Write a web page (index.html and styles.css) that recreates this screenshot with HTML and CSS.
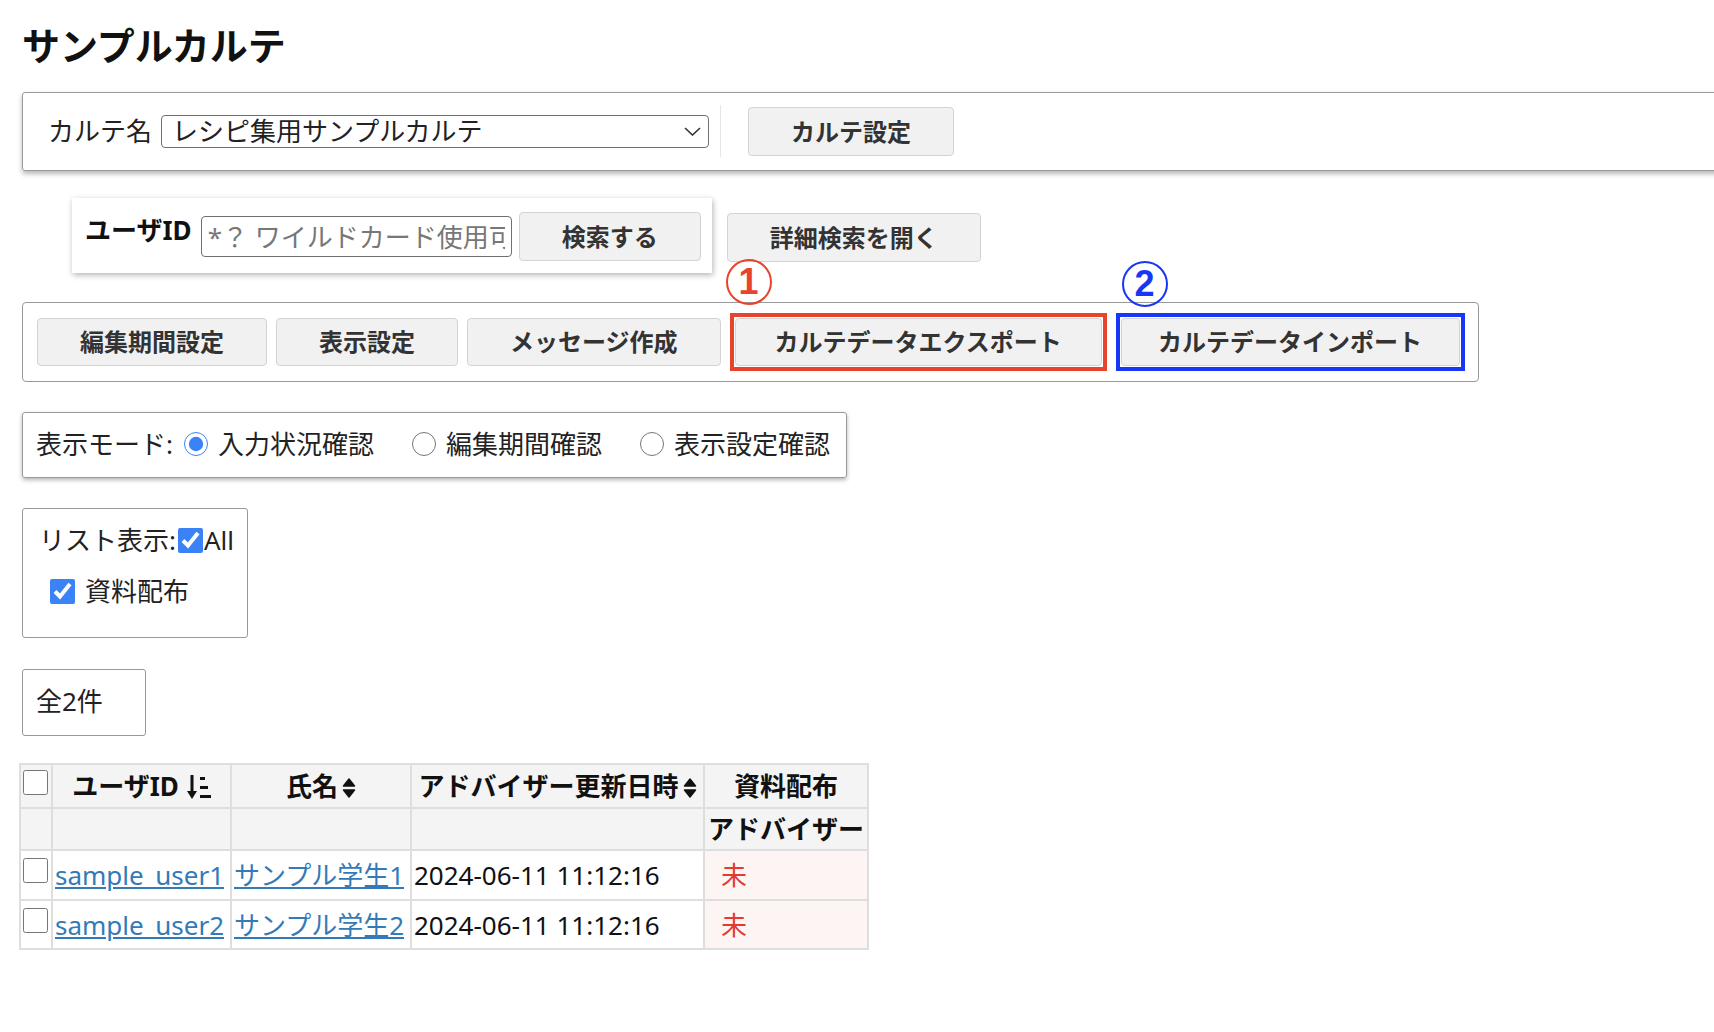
FILE: index.html
```html
<!DOCTYPE html>
<html lang="ja">
<head>
<meta charset="utf-8">
<title>サンプルカルテ</title>
<link rel="stylesheet" href="styles.css">
</head>
<body>
<h1 class="page-title">サンプルカルテ</h1>

<div class="karte-bar">
  <label class="karte-label">カルテ名</label>
  <span class="select-wrap">
    <select class="karte-select"><option>レシピ集用サンプルカルテ</option></select>
    <svg class="select-chevron" width="17" height="9" viewBox="0 0 17 9"><path d="M1 1l7.5 7 7.5-7" fill="none" stroke="#333" stroke-width="1.6"/></svg>
  </span>
  <span class="divider"></span>
  <button class="btn btn-top">カルテ設定</button>
</div>

<div class="search-row">
  <div class="search-box">
    <span class="search-label">ユーザID</span>
    <input class="search-input" type="text" placeholder="*？ ワイルドカード使用可">
    <button class="btn btn-top">検索する</button>
  </div>
  <button class="btn btn-top btn-detail">詳細検索を開く</button>
</div>

<div class="action-bar">
  <button class="btn btn-action">編集期間設定</button>
  <button class="btn btn-action">表示設定</button>
  <button class="btn btn-action">メッセージ作成</button>
  <div class="annot annot-red">
    <span class="mark mark-red">1</span>
    <button class="btn btn-action btn-export">カルテデータエクスポート</button>
  </div>
  <div class="annot annot-blue">
    <span class="mark mark-blue">2</span>
    <button class="btn btn-action btn-import">カルテデータインポート</button>
  </div>
</div>

<div class="mode-box">
  <span class="mode-label">表示モード:</span>
  <label class="mode-opt mode-first"><input type="radio" name="mode" checked>入力状況確認</label>
  <label class="mode-opt"><input type="radio" name="mode">編集期間確認</label>
  <label class="mode-opt"><input type="radio" name="mode">表示設定確認</label>
</div>

<div class="list-box">
  <div class="list-row1">リスト表示:<input type="checkbox" checked class="cb cb-all">All</div>
  <div class="list-row2"><input type="checkbox" checked class="cb cb-item">資料配布</div>
</div>

<div class="count-box">全2件</div>

<table class="list-table">
  <colgroup>
    <col class="w1"><col class="w2"><col class="w3"><col class="w4"><col class="w5">
  </colgroup>
  <thead>
    <tr class="head1">
      <th class="c-check"><input type="checkbox" class="cb"></th>
      <th>ユーザID<svg class="ico-amount" width="24" height="26" viewBox="0 0 24 26"><path d="M5 1v18" stroke="#111" stroke-width="3"/><path d="M0 17h10l-5 8z" fill="#111"/><rect x="13" y="3" width="5" height="3" fill="#111"/><rect x="13" y="12" width="8" height="3" fill="#111"/><rect x="13" y="21" width="11" height="3" fill="#111"/></svg></th>
      <th>氏名<svg class="ico-sort" width="14" height="24" viewBox="0 0 14 24"><path d="M1.5 10L7 3l5.5 7zM1.5 14L7 21l5.5-7z" fill="#111" stroke="#111" stroke-width="1.5" stroke-linejoin="round"/></svg></th>
      <th>アドバイザー更新日時<svg class="ico-sort" width="14" height="24" viewBox="0 0 14 24"><path d="M1.5 10L7 3l5.5 7zM1.5 14L7 21l5.5-7z" fill="#111" stroke="#111" stroke-width="1.5" stroke-linejoin="round"/></svg></th>
      <th>資料配布</th>
    </tr>
    <tr class="head2">
      <th></th><th></th><th></th><th></th><th>アドバイザー</th>
    </tr>
  </thead>
  <tbody>
    <tr class="row1">
      <td class="c-check"><input type="checkbox" class="cb"></td>
      <td><a href="#">sample_user1</a></td>
      <td><a href="#">サンプル学生1</a></td>
      <td>2024-06-11 11:12:16</td>
      <td class="c-status">未</td>
    </tr>
    <tr class="row2">
      <td class="c-check"><input type="checkbox" class="cb"></td>
      <td><a href="#">sample_user2</a></td>
      <td><a href="#">サンプル学生2</a></td>
      <td>2024-06-11 11:12:16</td>
      <td class="c-status">未</td>
    </tr>
  </tbody>
</table>
</body>
</html>
```

FILE: styles.css
```css
html {
  overflow-x: hidden;
}

body {
  margin: 0;
  padding: 0 0 0 22px;
  font-family: "Noto Sans", "Noto Sans CJK JP", sans-serif;
  font-size: 26px;
  line-height: 32px;
  color: #222;
  background: #fff;
}

.page-title {
  margin: 22px 0 0;
  font-size: 38px;
  line-height: 46px;
  font-weight: bold;
  color: #111;
}

/* generic button */
.btn {
  font-family: "Noto Sans", "Noto Sans CJK JP", sans-serif;
  font-size: 24px;
  font-weight: bold;
  color: #333;
  background: #f1f1f1;
  border: 1px solid #d3d3d3;
  border-radius: 4px;
  padding: 0 42px;
  margin: 0;
  white-space: nowrap;
  box-sizing: border-box;
}

.btn-top {
  height: 49px;
  line-height: 47px;
}

.btn-action {
  height: 48px;
  line-height: 46px;
}

/* karte bar */
.karte-bar {
  display: flex;
  align-items: center;
  margin: 24px -30px 0 0;
  padding: 12px 0 13px 25px;
  border: 1px solid #999;
  border-radius: 3px;
  box-shadow: 0 3px 5px rgba(0, 0, 0, 0.28);
}

.karte-label {
  margin-right: 9px;
}

.select-wrap {
  position: relative;
  display: block;
}

.karte-select {
  appearance: none;
  -webkit-appearance: none;
  display: block;
  width: 548px;
  height: 33px;
  box-sizing: border-box;
  padding: 0 30px 0 10px;
  font-family: "Noto Sans", "Noto Sans CJK JP", sans-serif;
  font-size: 26px;
  line-height: 31px;
  color: #222;
  background: #fff;
  border: 1px solid #707070;
  border-radius: 4px;
}

.select-chevron {
  position: absolute;
  right: 8px;
  top: 12px;
  pointer-events: none;
}

.divider {
  display: block;
  width: 1px;
  height: 52px;
  background: #e6e6e6;
  margin: 0 27px 0 11px;
}

/* search row */
.search-row {
  display: flex;
  align-items: flex-start;
  margin-top: 27px;
}

.search-box {
  display: flex;
  align-items: center;
  margin-left: 50px;
  padding: 14px 11px 12px 13px;
  background: #fff;
  box-shadow: 1px 2px 6px rgba(0, 0, 0, 0.3);
}

.search-label {
  align-self: flex-start;
  margin-top: 2px;
  margin-right: 9px;
  font-weight: bold;
  color: #111;
}

.search-input {
  width: 311px;
  height: 41px;
  box-sizing: border-box;
  margin: 0 7px 0 0;
  padding: 0 6px;
  font-family: "Noto Sans", "Noto Sans CJK JP", sans-serif;
  font-size: 26px;
  border: 1px solid #707070;
  border-radius: 4px;
  color: #222;
}

.search-input::placeholder {
  color: #777;
}

.btn-detail {
  margin: 15px 0 0 15px;
}

/* action bar */
.action-bar {
  display: flex;
  align-items: center;
  gap: 9px;
  width: fit-content;
  margin-top: 29px;
  padding: 10px 13px 10px 14px;
  border: 1px solid #999;
  border-radius: 4px;
}

.annot {
  position: relative;
  display: flex;
  padding: 1px;
  border: 4px solid;
}

.annot-red {
  border-color: #e8432d;
}

.annot-blue {
  border-color: #1736f5;
}

.btn-export {
  padding: 0 38px;
  width: 367px;
}

.btn-import {
  padding: 0 36px;
  width: 339px;
}

.mark {
  position: absolute;
  width: 42px;
  height: 42px;
  border: 2px solid;
  border-radius: 50%;
  font-family: "Liberation Sans", sans-serif;
  font-size: 36px;
  line-height: 42px;
  font-weight: bold;
  text-align: center;
}

.mark-red {
  color: #e8432d;
  top: -58px;
  left: -8px;
}

.mark-blue {
  color: #1736f5;
  top: -56px;
  left: 2px;
}

/* mode box */
.mode-box {
  display: flex;
  align-items: center;
  width: fit-content;
  margin-top: 30px;
  padding: 15px 16px 17px 13px;
  border: 1px solid #999;
  border-radius: 3px;
  box-shadow: 0 2px 4px rgba(0, 0, 0, 0.3);
}

.mode-opt {
  display: flex;
  align-items: center;
  margin-left: 38px;
}

.mode-opt.mode-first {
  margin-left: 11px;
}

.mode-opt input {
  width: 24px;
  height: 24px;
  margin: 0 10px 0 0;
  accent-color: #3b82f6;
}

/* list box */
.list-box {
  width: fit-content;
  margin-top: 30px;
  padding: 15px 13px 30px 16px;
  border: 1px solid #999;
  border-radius: 3px;
}

.list-row1 {
  display: flex;
  align-items: center;
}

.list-row2 {
  display: flex;
  align-items: center;
  margin-top: 19px;
  padding-left: 11px;
}

.cb {
  width: 25px;
  height: 25px;
  margin: 0;
  accent-color: #3b82f6;
}

.cb-all {
  margin: 0 1px 0 2px;
}

.cb-item {
  margin-right: 10px;
}

/* count */
.count-box {
  width: fit-content;
  margin-top: 31px;
  padding: 15px 42px 18px 13px;
  border: 1px solid #999;
  border-radius: 3px;
}

/* table */
.list-table {
  border-collapse: collapse;
  table-layout: fixed;
  width: 848px;
  margin: 27px 0 0 -3px;
}

.w1 { width: 32px; }
.w2 { width: 179px; }
.w3 { width: 180px; }
.w4 { width: 293px; }
.w5 { width: 164px; }

.list-table th,
.list-table td {
  border: 2px solid #dedede;
  padding: 0 2px;
  white-space: nowrap;
  overflow: hidden;
}

.list-table th {
  background: #f4f4f4;
  font-weight: bold;
  color: #111;
  text-align: center;
}

.head1 th {
  height: 38px;
}

.head2 th {
  height: 40px;
}

.row1 td {
  height: 42px;
}

.row2 td {
  height: 41px;
}

.list-table td {
  text-align: left;
  color: #111;
}

.list-table .c-check {
  vertical-align: top;
  padding: 4px 0 0 2px;
  text-align: left;
}

.list-table td.c-check {
  padding-top: 6px;
}

.list-table a {
  color: #337ab7;
  text-decoration: underline;
}

.list-table .c-status {
  background: #fcf5f4;
  color: #e53a2f;
  padding-left: 16px;
}

.ico-amount {
  margin-left: 8px;
  vertical-align: -4px;
}

.ico-sort {
  margin-left: 4px;
  vertical-align: -4px;
}
```
